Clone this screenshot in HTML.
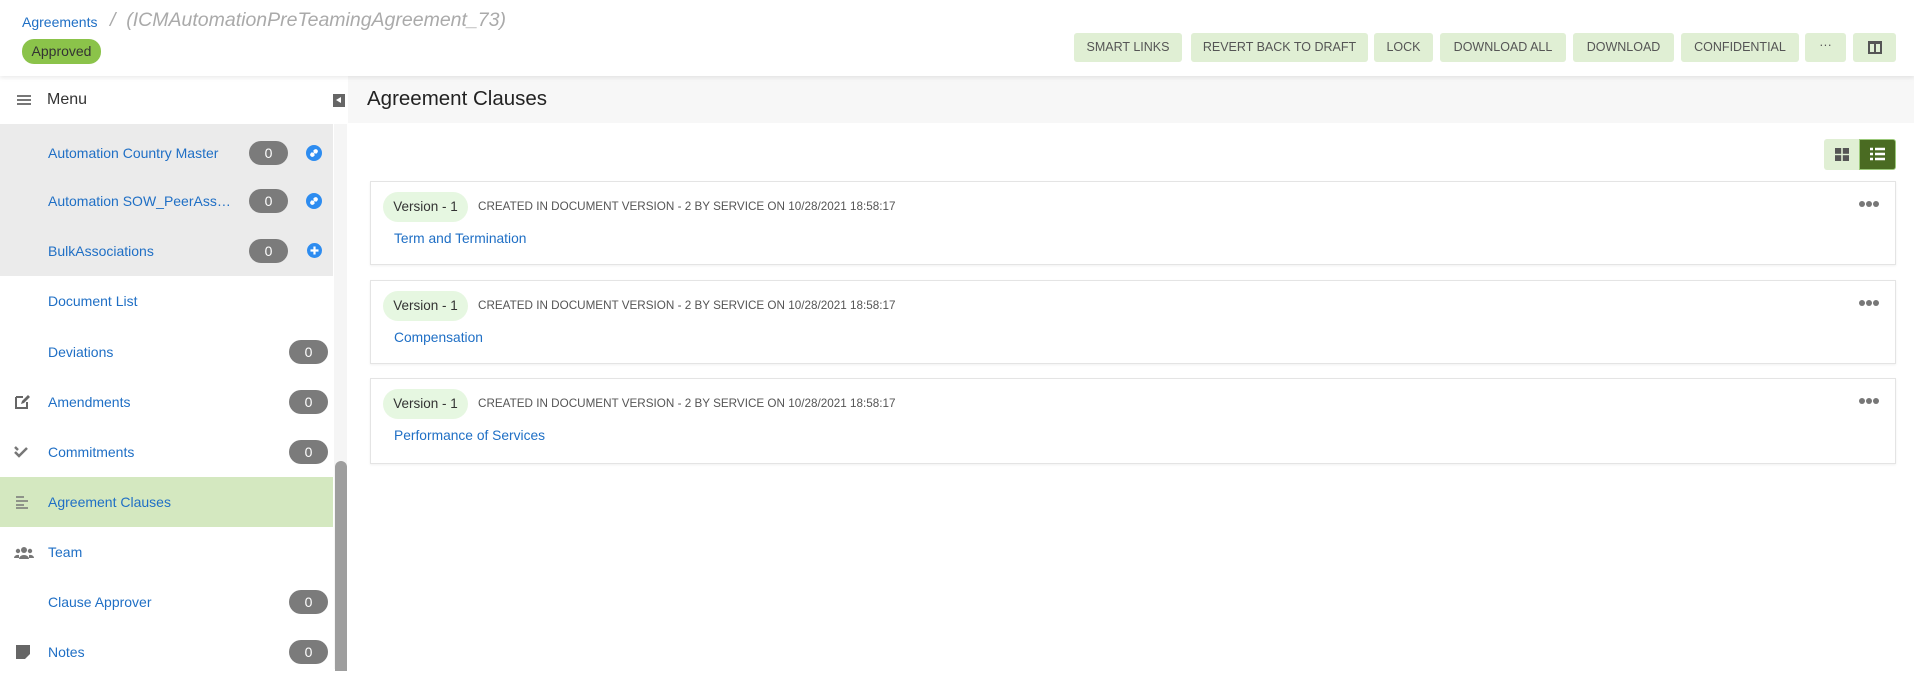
<!DOCTYPE html>
<html><head><meta charset="utf-8"><style>
*{box-sizing:border-box;margin:0;padding:0}
body{width:1914px;height:669px;overflow:hidden;background:#fff;font-family:"Liberation Sans",sans-serif;position:relative}
.a{position:absolute}
.btn{position:absolute;top:33px;height:29px;background:#e0efd4;border-radius:3px;color:#555;font-size:12.5px;line-height:29px;text-align:center;white-space:nowrap}
.item{position:absolute;left:0;width:333px;height:50px;font-size:14px;color:#1f6fc5;line-height:50px;padding-left:48px;white-space:nowrap}
.badge{position:absolute;width:39px;height:24px;border-radius:12px;background:#7b7b7b;color:#fff;font-size:14px;line-height:24px;text-align:center}
.card{position:absolute;left:370px;width:1526px;border:1px solid #e4e4e4;box-shadow:0 1px 2px rgba(0,0,0,.06);background:#fff}
.ver{position:absolute;left:12px;top:10px;width:85px;height:30px;border-radius:15px;background:#e6f7e1;color:#333;font-size:13.5px;line-height:30px;text-align:center}
.cr{position:absolute;left:107px;top:10px;line-height:30px;font-size:11.7px;color:#555;white-space:nowrap}
.lk{position:absolute;left:23px;top:49px;font-size:13.8px;color:#1f6fc5}
.dots{position:absolute;right:16px;top:12px}
.dots i{display:inline-block;width:6px;height:6px;border-radius:50%;background:#777;margin-left:1px}
.ic{position:absolute;left:14px}
</style></head><body>
<div class="a" style="left:0;top:0;width:1914px;height:76px;background:#fff;box-shadow:0 2px 4px rgba(0,0,0,.08);z-index:2">
<div class="a" style="left:22px;top:14px;font-size:14px;color:#1f6fc5">Agreements</div>
<div class="a" style="left:110px;top:9px;font-size:19.5px;color:#aaa;font-style:italic">/ &nbsp;(ICMAutomationPreTeamingAgreement_73)</div>
<div class="a" style="left:22px;top:39px;width:79px;height:25px;border-radius:12px;background:#8bc34a;color:#333;font-size:14px;line-height:25px;text-align:center">Approved</div>
<div class="btn" style="left:1074px;width:108px">SMART LINKS</div>
<div class="btn" style="left:1191px;width:177px">REVERT BACK TO DRAFT</div>
<div class="btn" style="left:1374px;width:59px">LOCK</div>
<div class="btn" style="left:1440px;width:126px">DOWNLOAD ALL</div>
<div class="btn" style="left:1573px;width:101px">DOWNLOAD</div>
<div class="btn" style="left:1681px;width:118px">CONFIDENTIAL</div>
<div class="btn" style="left:1805px;width:41px;line-height:24px">···</div>
<div class="btn" style="left:1853px;width:43px"><div class="a" style="left:15px;top:8px;width:14px;height:13px;border:2px solid #555;border-top-width:3px"></div><div class="a" style="left:21px;top:9px;width:2px;height:11px;background:#555"></div></div>
</div>
<div class="a" style="left:17px;top:95px;width:14px;height:2px;background:#777;box-shadow:0 4px 0 #777,0 8px 0 #777"></div>
<div class="a" style="left:47px;top:91px;font-size:16px;color:#333">Menu</div>
<div class="a" style="left:348px;top:76px;width:1566px;height:47px;background:#f7f7f7"></div>
<div class="a" style="left:333px;top:94px;width:12px;height:13px;background:#666"></div>
<div class="a" style="left:336px;top:97px;width:0;height:0;border-top:3.5px solid transparent;border-bottom:3.5px solid transparent;border-right:5px solid #fff"></div>
<div class="a" style="left:367px;top:87px;font-size:20.5px;color:#222">Agreement Clauses</div>
<div class="a" style="left:0;top:124px;width:333px;height:152px;background:#ebebeb"></div>
<div class="a" style="left:0;top:477px;width:333px;height:50px;background:#d4e8c0"></div>
<div class="a" style="left:334px;top:124px;width:13px;height:545px;background:#f5f5f5"></div>
<div class="a" style="left:335px;top:461px;width:12px;height:210px;background:#9e9e9e;border-radius:6px 6px 0 0"></div>

<div class="item" style="top:128px">Automation Country Master</div><div class="badge" style="left:249px;top:141px">0</div>
<div class="item" style="top:176px">Automation SOW_PeerAss…</div><div class="badge" style="left:249px;top:189px">0</div>
<div class="item" style="top:226px">BulkAssociations</div><div class="badge" style="left:249px;top:239px">0</div>
<svg class="a" style="left:306px;top:145px" width="16" height="16"><circle cx="8" cy="8" r="8" fill="#2d8cf0"/><path d="M5 11l6-6M6.5 7.5l-1.5 1.5a1.5 1.5 0 0 0 2 2l1.5-1.5M9.5 8.5l1.5-1.5a1.5 1.5 0 0 0-2-2L7.5 6.5" stroke="#fff" stroke-width="1.4" fill="none"/></svg>
<svg class="a" style="left:306px;top:193px" width="16" height="16"><circle cx="8" cy="8" r="8" fill="#2d8cf0"/><path d="M5 11l6-6M6.5 7.5l-1.5 1.5a1.5 1.5 0 0 0 2 2l1.5-1.5M9.5 8.5l1.5-1.5a1.5 1.5 0 0 0-2-2L7.5 6.5" stroke="#fff" stroke-width="1.4" fill="none"/></svg>
<svg class="a" style="left:307px;top:243px" width="15" height="15"><circle cx="7.5" cy="7.5" r="7.5" fill="#2d8cf0"/><path d="M7.5 3.5v8M3.5 7.5h8" stroke="#fff" stroke-width="2.2"/></svg>

<div class="item" style="top:276px">Document List</div>
<div class="item" style="top:327px">Deviations</div><div class="badge" style="left:289px;top:340px">0</div>
<div class="item" style="top:377px">Amendments</div><div class="badge" style="left:289px;top:390px">0</div>
<div class="item" style="top:427px">Commitments</div><div class="badge" style="left:289px;top:440px">0</div>
<div class="item" style="top:477px">Agreement Clauses</div>
<div class="item" style="top:527px">Team</div>
<div class="item" style="top:577px">Clause Approver</div><div class="badge" style="left:289px;top:590px">0</div>
<div class="item" style="top:627px">Notes</div><div class="badge" style="left:289px;top:640px">0</div>
<svg class="ic a" style="top:394px" width="17" height="16"><path d="M2 3h7M2 3v11h11V8" stroke="#666" stroke-width="2" fill="none"/><path d="M7 10l1-3 6-6 2 2-6 6z" fill="#666"/></svg>
<svg class="ic a" style="top:445px" width="16" height="14"><path d="M1 7l4 4 8-8" stroke="#777" stroke-width="2.5" fill="none"/><path d="M1 2l3 3" stroke="#777" stroke-width="2.5"/></svg>
<svg class="ic a" style="top:495px" width="16" height="14"><path d="M2 2h8M2 6h12M2 10h8M2 13h12" stroke="#777" stroke-width="1.5"/></svg>
<svg class="ic a" style="top:546px" width="20" height="14"><circle cx="10" cy="4" r="3" fill="#777"/><circle cx="4" cy="5" r="2.2" fill="#777"/><circle cx="16" cy="5" r="2.2" fill="#777"/><path d="M5 13a5 4 0 0 1 10 0zM0 12a4 3 0 0 1 5-3v3zM20 12a4 3 0 0 0-5-3v3z" fill="#777"/></svg>
<svg class="ic a" style="top:645px;left:16px" width="14" height="14"><path d="M0 0h14v9l-5 5H0z" fill="#666"/></svg>
<div class="a" style="left:1824px;top:139px;width:36px;height:31px;background:#e0efd4;border-radius:3px 0 0 3px"></div>
<svg class="a" style="left:1835px;top:148px" width="14" height="13"><rect x="0" y="0" width="6.2" height="5.8" fill="#555"/><rect x="7.8" y="0" width="6.2" height="5.8" fill="#555"/><rect x="0" y="7.2" width="6.2" height="5.8" fill="#555"/><rect x="7.8" y="7.2" width="6.2" height="5.8" fill="#555"/></svg>
<div class="a" style="left:1859px;top:139px;width:37px;height:31px;background:#4a6b22;border:1px solid #9bc97a;border-radius:0 3px 3px 0"></div>
<svg class="a" style="left:1870px;top:147px" width="15" height="14"><path d="M0 2h3M0 7h3M0 12h3M5 2h10M5 7h10M5 12h10" stroke="#fff" stroke-width="2.5"/></svg>
<div class="card" style="top:181px;height:84px"><div class="ver">Version - 1</div><div class="cr">CREATED IN DOCUMENT VERSION - 2 BY SERVICE ON 10/28/2021 18:58:17</div><div class="lk">Term and Termination</div><div class="dots"><i></i><i></i><i></i></div></div>
<div class="card" style="top:280px;height:84px"><div class="ver">Version - 1</div><div class="cr">CREATED IN DOCUMENT VERSION - 2 BY SERVICE ON 10/28/2021 18:58:17</div><div class="lk">Compensation</div><div class="dots"><i></i><i></i><i></i></div></div>
<div class="card" style="top:378px;height:86px"><div class="ver">Version - 1</div><div class="cr">CREATED IN DOCUMENT VERSION - 2 BY SERVICE ON 10/28/2021 18:58:17</div><div class="lk">Performance of Services</div><div class="dots"><i></i><i></i><i></i></div></div>
</body></html>
